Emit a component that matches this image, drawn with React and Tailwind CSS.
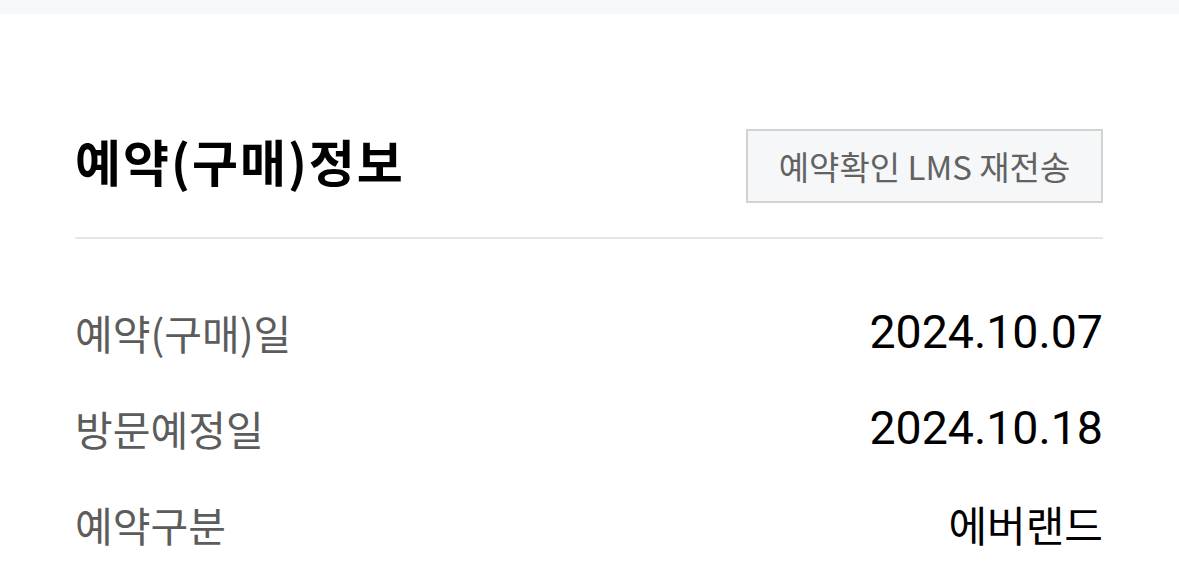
import React from "react";

const rows = [
  { label: "예약(구매)일", value: "2024.10.07", num: true },
  { label: "방문예정일", value: "2024.10.18", num: true },
  { label: "예약구분", value: "에버랜드", num: false },
];

export default function App() {
  return (
    <div className="w-[1179px] h-[574px] overflow-hidden bg-white" style={{ fontFamily: '"Noto Sans CJK KR", "Noto Sans", sans-serif' }}>
      <div className="h-[14px] bg-[#f7f8fa]" />
      <div className="pl-[75px] pr-[76px]">
        <div className="flex items-center justify-between pt-[115px] pb-[34px]">
          <h1 className="text-[50px] font-bold leading-none text-black tracking-[2px] mb-[12px]">예약(구매)정보</h1>
          <button className="w-[357px] h-[74px] border-2 border-[#d2d2d2] bg-[#f5f7f9] text-[33px] text-[#626262] leading-none">
            예약확인 LMS 재전송
          </button>
        </div>
        <div className="h-[2px] bg-[#e6e6e6]" />
        <div className="flex flex-col pt-[70px] gap-[50px]">
          {rows.map((r) => (
            <div key={r.label} className="flex items-center justify-between h-[46px]">
              <span className="text-[41px] text-[#5c5c5c] leading-none">{r.label}</span>
              {r.num ? (
                <span className="text-[46.5px] text-black leading-none" style={{ fontFamily: 'Roboto, "Noto Sans CJK KR", sans-serif' }}>{r.value}</span>
              ) : (
                <span className="text-[42px] text-black leading-none">{r.value}</span>
              )}
            </div>
          ))}
        </div>
      </div>
    </div>
  );
}
